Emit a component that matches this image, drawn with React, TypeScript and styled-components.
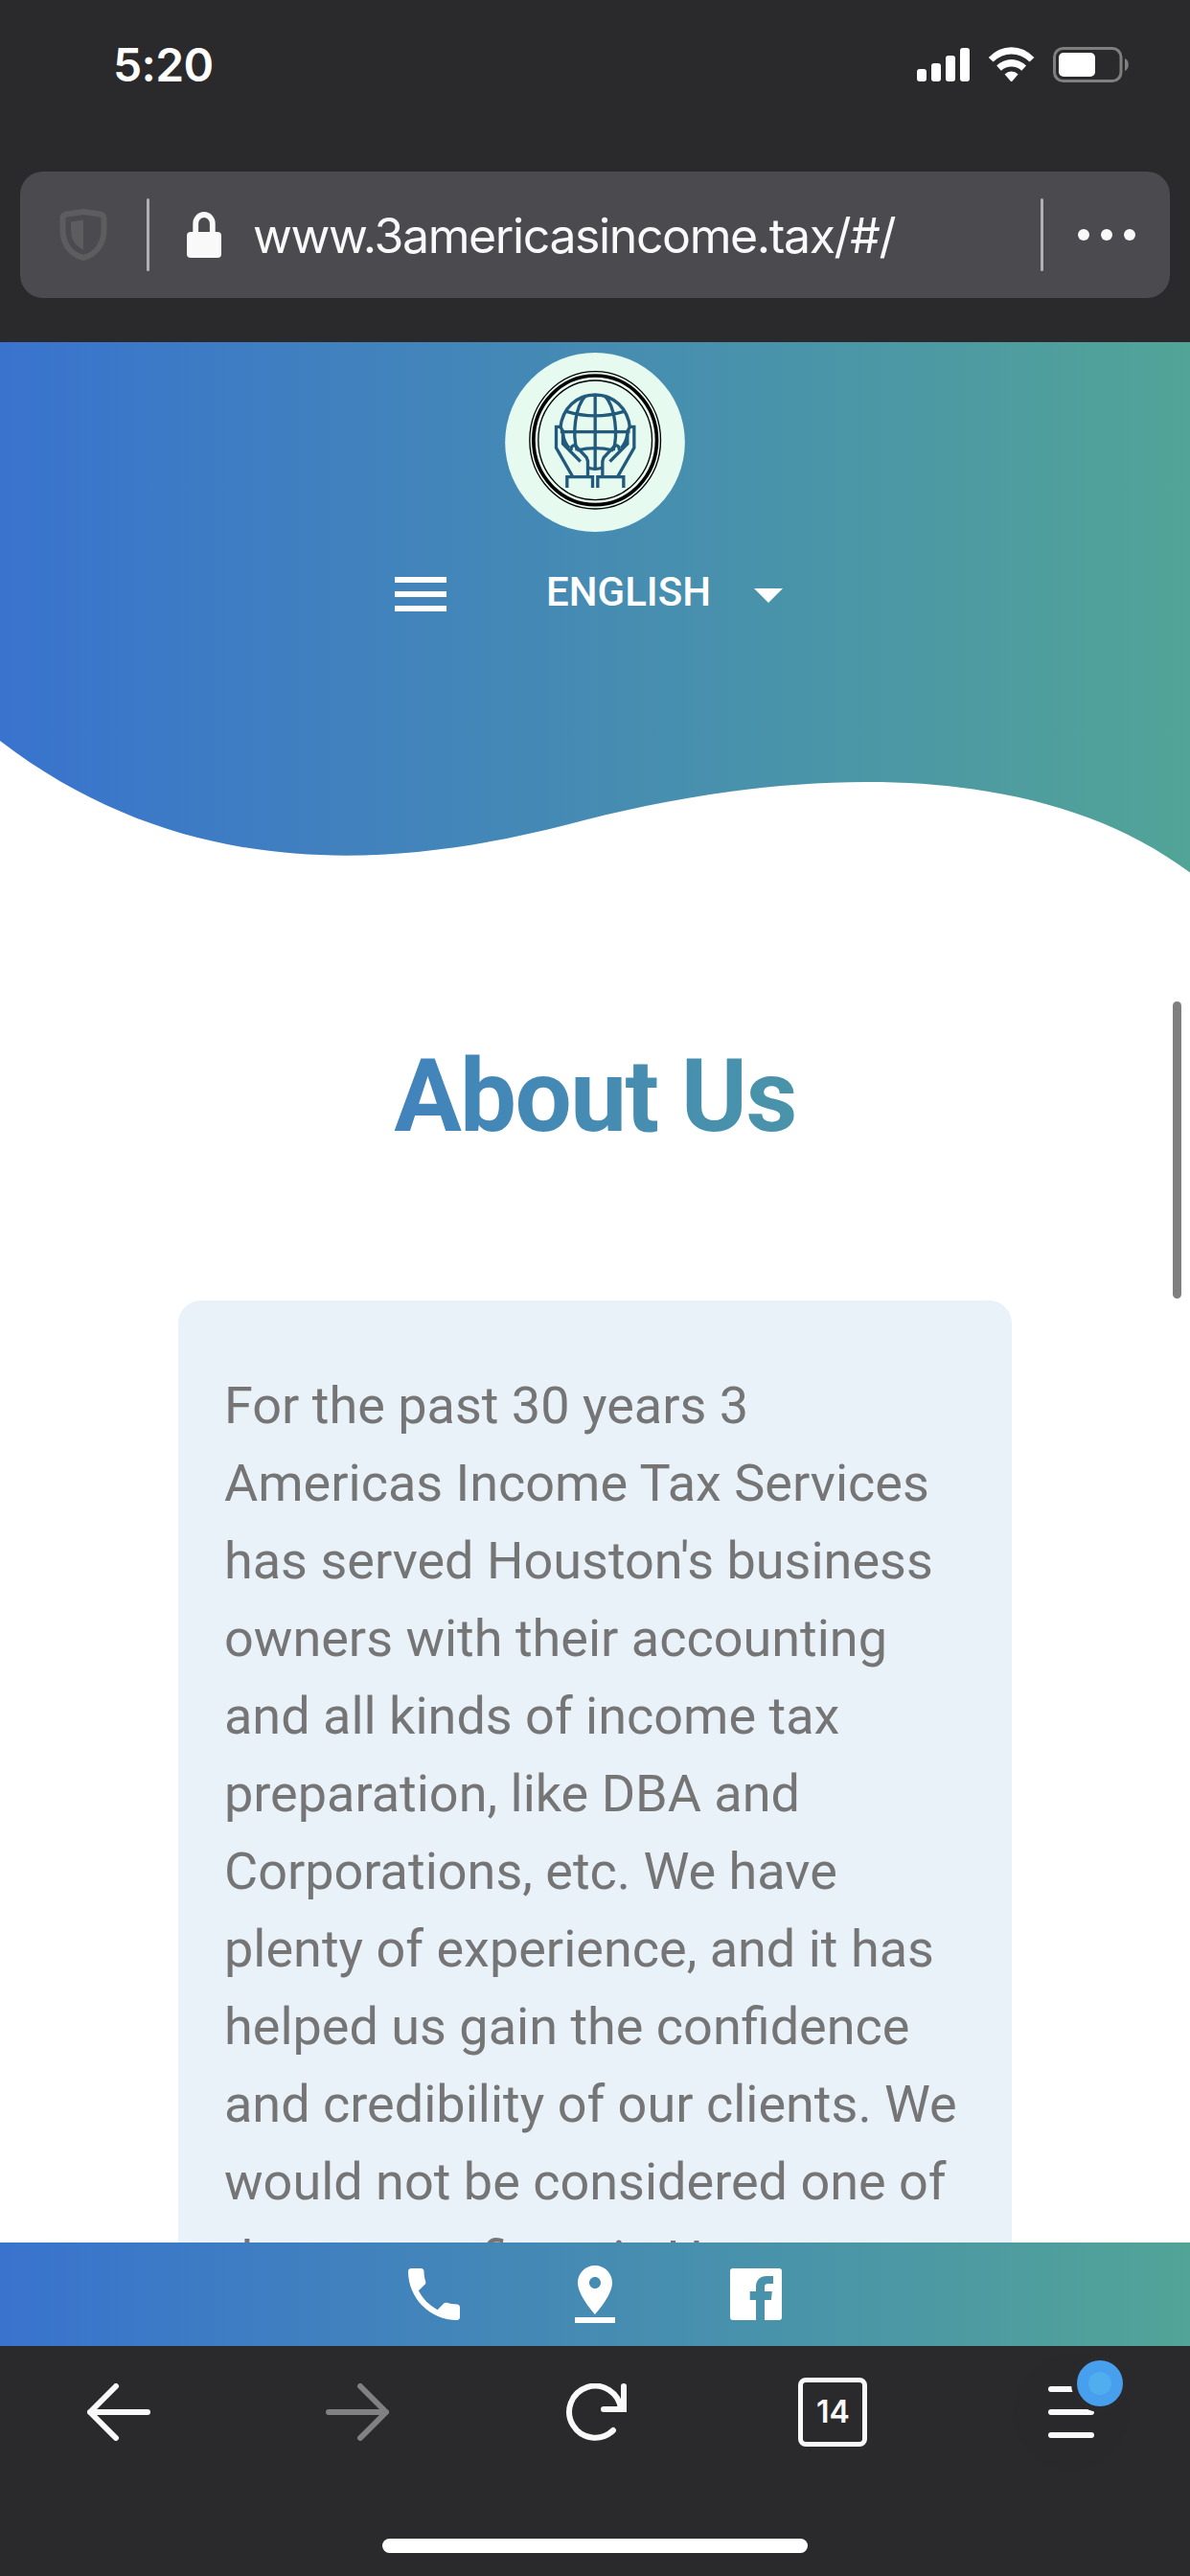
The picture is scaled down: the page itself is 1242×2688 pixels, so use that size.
import React from "react";
import styled, { createGlobalStyle } from "styled-components";

const GRADIENT = "linear-gradient(to right, #3973ce, #52a497)";
const CHROME = "#2a2a2c";
const LIGHT = "#f9f9fa";

const GlobalStyle = createGlobalStyle`
  *, *::before, *::after { box-sizing: border-box; }
  body { margin: 0; background: #fff; }
  svg { display: block; flex: none; }
`;

const Screen = styled.div`
  display: flex;
  flex-direction: column;
  width: 1242px;
  height: 2688px;
  overflow: hidden;
  background: #fff;
  font-family: Roboto, "Liberation Sans", sans-serif;
`;

const BrowserTop = styled.header`
  flex: none;
  height: 357px;
  background: ${CHROME};
`;

const StatusBar = styled.div`
  display: flex;
  align-items: center;
  justify-content: space-between;
  height: 179px;
  padding: 0 64px 43px 118px;
`;

const Clock = styled.time`
  font: 600 48px/58px Inter, sans-serif;
  letter-spacing: -0.6px;
  color: #fff;
`;

const AddressBar = styled.div`
  display: flex;
  align-items: center;
  height: 132px;
  margin: 0 21px;
  padding: 0 36px 0 40px;
  border-radius: 24px;
  background: #4a4a4f;
`;

const Divider = styled.span`
  width: 3px;
  height: 76px;
  border-radius: 2px;
  background: #b1b1b3;
`;

const ShieldSlot = styled.span`
  width: 92px;
`;

const LockSlot = styled.span`
  width: 108px;
  padding-left: 39px;
`;

const Url = styled.span`
  flex: 1;
  padding-top: 2px;
  font: 400 50px/60px Inter, sans-serif;
  letter-spacing: -1.4px;
  color: ${LIGHT};
  white-space: nowrap;
`;

const Dots = styled.span`
  display: flex;
  gap: 12px;
  margin-left: 36px;
`;

const Dot = styled.i`
  width: 12px;
  height: 12px;
  border-radius: 50%;
  background: ${LIGHT};
`;

const Page = styled.main`
  position: relative;
  flex: none;
  height: 1983px;
  overflow: hidden;
`;

const Hero = styled.section`
  display: flex;
  flex-direction: column;
  align-items: center;
  height: 556px;
  padding-top: 11px;
  background: ${GRADIENT};
`;

const Nav = styled.nav`
  display: flex;
  align-items: center;
  height: 72px;
  margin: 29px 0 0 8px;
`;

const MenuButton = styled.span`
  margin-right: 104px;
`;

const Language = styled.span`
  width: 177px;
  margin: 0 19px 5px 0;
  font-size: 42px;
  font-weight: 500;
  line-height: 48px;
  color: #fff;
`;

const WaveEdge = styled.div`
  height: 150px;
  margin-top: auto;
`;

const Title = styled.h1`
  margin: 160px 0 0;
  height: 144px;
  font-size: 105px;
  font-weight: 700;
  line-height: 144px;
  letter-spacing: -1.6px;
  text-align: center;
  color: transparent;
  background: ${GRADIENT};
  background-clip: text;
  -webkit-background-clip: text;
`;

const Card = styled.article`
  width: 870px;
  margin: 140px auto 0;
  padding: 69px 48px;
  border-radius: 24px;
  background: #e9f1f9;
`;

const Paragraph = styled.p`
  margin: 0;
  font-size: 54px;
  line-height: 81px;
  color: #757575;
`;

const ScrollThumb = styled.span`
  position: absolute;
  top: 688px;
  right: 9px;
  width: 9px;
  height: 310px;
  border-radius: 5px;
  background: #7f7f7f;
`;

const ContactBar = styled.div`
  display: flex;
  flex: none;
  align-items: center;
  justify-content: center;
  gap: 96px;
  height: 108px;
  background: ${GRADIENT};
`;

const BrowserBottom = styled.footer`
  display: flex;
  flex: 1;
  flex-direction: column;
  align-items: center;
  background: ${CHROME};
`;

const Toolbar = styled.div`
  display: grid;
  grid-template-columns: repeat(5, 248.4px);
  align-items: center;
  justify-items: center;
  width: 1242px;
  height: 138px;
`;

const TabCount = styled.span`
  display: flex;
  align-items: center;
  justify-content: center;
  width: 72px;
  height: 72px;
  border: 5px solid ${LIGHT};
  border-radius: 8px;
  font: 600 32px/36px Inter, sans-serif;
  color: ${LIGHT};
`;

const HomeIndicator = styled.span`
  width: 444px;
  height: 15px;
  margin-top: 63px;
  border-radius: 8px;
  background: #fff;
`;

const StatusIcons = () => (
  <svg width="222" height="38" viewBox="956 49 222 38" fill="#fff">
    <rect x="957" y="72" width="10" height="13" rx="3" />
    <rect x="972" y="66" width="10" height="19" rx="3" />
    <rect x="987" y="58" width="10" height="27" rx="3" />
    <rect x="1002" y="50" width="10" height="35" rx="3" />
    <path d="M1031.8 60 Q1042 49.2 1055.6 49.2 T1079.4 60 L1074.6 64.6 Q1066 56.6 1055.6 56.6 T1036.6 64.6Z" />
    <path d="M1040.2 68.6 Q1047 62 1055.6 62 T1071 68.6 L1066.3 73.8 Q1061.4 69.6 1055.6 69.6 T1044.9 73.8Z" />
    <path d="M1048.6 77.6 Q1051.6 74.6 1055.6 74.6 T1062.6 77.6 L1056.6 84.4 Q1055.6 85.4 1054.6 84.4Z" />
    <rect x="1100.5" y="50.5" width="69.5" height="34" rx="9" fill="none" stroke="#7f7f80" strokeWidth="3" />
    <rect x="1105" y="55" width="38" height="25" rx="5" />
    <path d="M1174 61c5 2 5 11 0 13z" fill="#7f7f80" />
  </svg>
);

const Shield = () => (
  <svg width="52" height="56" viewBox="0 0 52 56">
    <path
      d="M26 4 L44 6.5 Q47.3 7.3 47.5 11 V22 C47.5 39 38 49 26 52 C14 49 4.5 39 4.5 22 V11 Q4.7 7.3 8 6.5Z"
      fill="none"
      stroke="#5d5d60"
      strokeWidth="6"
    />
    <path d="M26 12.5 V44 C17 39 13 33 13 22 V14.4Z" fill="#5d5d60" />
  </svg>
);

const Lock = () => (
  <svg width="36" height="48" viewBox="0 0 36 48">
    <rect y="21" width="36" height="27" rx="4" fill={LIGHT} />
    <path d="M9.2 24V12.5a8.8 9.5 0 0 1 17.6 0V24" fill="none" stroke={LIGHT} strokeWidth="5.8" />
  </svg>
);

/* Globe held by two hands inside a triple ring */
const Logo = () => (
  <svg width="188" height="187" viewBox="81 54 563 561">
    <ellipse cx="362.5" cy="334.5" rx="281.5" ry="280.5" fill="#e6faf0" />
    <g fill="none" stroke="#000">
      <ellipse cx="363" cy="328" rx="205" ry="215" strokeWidth="4" />
      <ellipse cx="363" cy="328" rx="193" ry="202" strokeWidth="11" />
      <ellipse cx="363" cy="328" rx="178" ry="187" strokeWidth="4" />
    </g>
    <g fill="none" stroke="#225a7c" strokeWidth="10">
      <path d="M254 290C260 228 306 186 363 186S466 228 472 290" />
      <path d="M363 186V418M254 302H472M273 238Q363 265 453 238" />
      <path d="M334 188C298 224 292 312 306 360M392 188C428 224 434 312 420 360M306 360Q363 346 420 360" />
      <path d="M262 308Q266 336 282 352M464 308Q460 336 444 352M340 414Q363 422 386 414" />
      <path d="M292 441L241 352V286H254L262 300V339L317 395" />
      <path d="M434 441L485 352V286H472L464 300V339L409 395" />
      <path d="M288 360Q286 344 300 344L336 382L340 394V441M438 360Q440 344 426 344L390 382L386 394V441" />
      <path d="M275 477V443H355V477M371 477V443H452V477" />
    </g>
  </svg>
);

const MenuIcon = () => (
  <svg width="54" height="36" viewBox="0 0 54 36" fill="#fff">
    <path d="M0 0h54v6H0zM0 15h54v6H0zM0 30h54v6H0z" />
  </svg>
);

const DropDown = () => (
  <svg width="72" height="72" viewBox="0 0 24 24" fill="#fff">
    <path d="M7 10l5 5 5-5z" />
  </svg>
);

const Wave = () => (
  <svg width="1242" height="150" viewBox="0 763 1242 150">
    <path d="M0 773C192 920 405 908 590 861C790 807 1067 779 1242 910.5V914H0Z" fill="#fff" />
  </svg>
);

const CONTACT_ICONS = [
  "M6.62 10.79c1.44 2.83 3.76 5.14 6.59 6.59l2.2-2.2c.27-.27.67-.36 1.02-.24 1.12.37 2.33.57 3.57.57.55 0 1 .45 1 1V20c0 .55-.45 1-1 1-9.39 0-17-7.61-17-17 0-.55.45-1 1-1h3.5c.55 0 1 .45 1 1 0 1.25.2 2.45.57 3.57.11.35.03.74-.25 1.02l-2.2 2.2z",
  "M18 8c0-3.31-2.69-6-6-6S6 4.69 6 8c0 4.5 6 11 6 11s6-6.5 6-11zm-8 0c0-1.1.9-2 2-2s2 .9 2 2-.89 2-2 2c-1.1 0-2-.9-2-2zM5 20v2h14v-2H5z",
  "M4 3H20Q21 3 21 4V20Q21 21 20 21H15V14H17.3L17.6 11H15V9.5C15 8.7 15.3 8.3 16.2 8.3H18V5.7H15.7C13.4 5.7 12 7.1 12 9.5V11H9.9V14H12V21H4Q3 21 3 20V4Q3 3 4 3Z",
];

const BackArrow = () => (
  <svg width="66" height="60" viewBox="0 0 66 60" fill="none" stroke={LIGHT} strokeWidth="6" strokeLinecap="round" strokeLinejoin="round">
    <path d="M30 3L3 30L30 57M3 30H63" />
  </svg>
);

const ForwardArrow = () => (
  <svg width="66" height="60" viewBox="0 0 66 60" fill="none" stroke="#818184" strokeWidth="6" strokeLinecap="round" strokeLinejoin="round">
    <path d="M36 3L63 30L36 57M63 30H3" />
  </svg>
);

const Reload = () => (
  <svg width="66" height="60" viewBox="-3 0 66 60" fill="none" stroke={LIGHT} strokeWidth="6" strokeLinecap="round">
    <path d="M49 49A27 27 0 1 1 57 27M60 3V27H39" />
  </svg>
);

const AppMenu = () => (
  <svg width="120" height="120" viewBox="0 0 120 120">
    <circle cx="60" cy="60" r="60" fill="#29292b" />
    <path d="M39 36H81M39 60H81M39 84H81" stroke={LIGHT} strokeWidth="6" strokeLinecap="round" />
    <circle cx="90" cy="30" r="30" fill={CHROME} />
    <circle cx="90" cy="30" r="24" fill="#489fed" />
    <circle cx="90" cy="30" r="12" fill="#50aeee" />
  </svg>
);

export default function App() {
  return (
    <Screen>
      <GlobalStyle />
      <BrowserTop>
        <StatusBar>
          <Clock>5:20</Clock>
          <StatusIcons />
        </StatusBar>
        <AddressBar>
          <ShieldSlot>
            <Shield />
          </ShieldSlot>
          <Divider />
          <LockSlot>
            <Lock />
          </LockSlot>
          <Url>www.3americasincome.tax/#/</Url>
          <Divider />
          <Dots>
            <Dot />
            <Dot />
            <Dot />
          </Dots>
        </AddressBar>
      </BrowserTop>
      <Page>
        <Hero>
          <Logo />
          <Nav>
            <MenuButton>
              <MenuIcon />
            </MenuButton>
            <Language>ENGLISH</Language>
            <DropDown />
          </Nav>
          <WaveEdge>
            <Wave />
          </WaveEdge>
        </Hero>
        <Title>About Us</Title>
        <Card>
          <Paragraph>
            For the past 30 years 3 Americas Income Tax Services has served Houston's business owners
            with their accounting and all kinds of income tax preparation, like DBA and Corporations,
            etc. We have plenty of experience, and it has helped us gain the confidence and
            credibility of our clients. We would not be considered one of the top tax firms in Houston
          </Paragraph>
        </Card>
        <ScrollThumb />
      </Page>
      <ContactBar>
        {CONTACT_ICONS.map((d) => (
          <svg key={d} width="72" height="72" viewBox="0 0 24 24" fill="#fff">
            <path d={d} />
          </svg>
        ))}
      </ContactBar>
      <BrowserBottom>
        <Toolbar>
          <BackArrow />
          <ForwardArrow />
          <Reload />
          <TabCount>14</TabCount>
          <AppMenu />
        </Toolbar>
        <HomeIndicator />
      </BrowserBottom>
    </Screen>
  );
}
